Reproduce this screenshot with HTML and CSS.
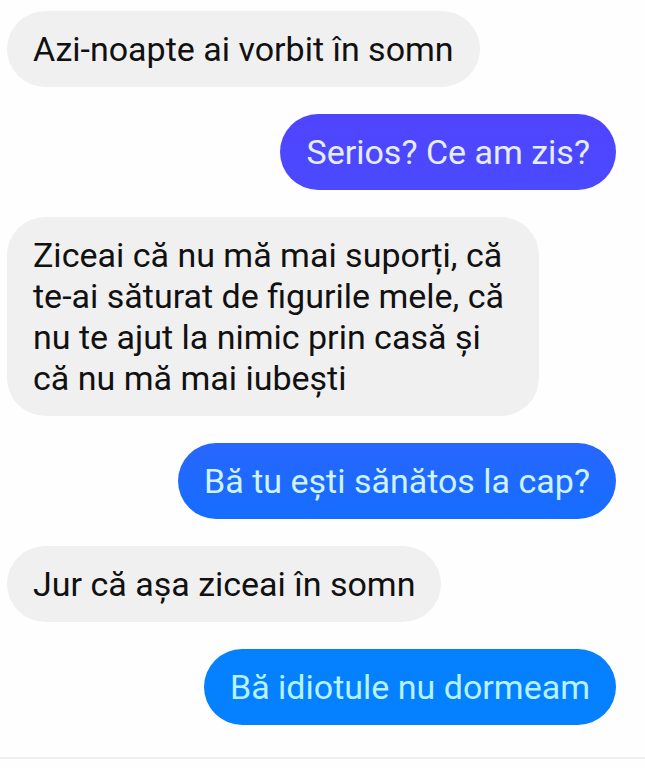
FILE: index.html
```html
<!DOCTYPE html>
<html lang="ro">
<head>
    <meta charset="UTF-8">
    <meta name="viewport" content="width=device-width, initial-scale=1.0">
    <title>Chat</title>
    <link rel="stylesheet" href="styles.css">
</head>
<body>
    <main class="chat">
        <p class="message received">Azi-noapte ai vorbit în somn</p>
        <p class="message sent violet">Serios? Ce am zis?</p>
        <p class="message received">Ziceai că nu mă mai suporți, că te-ai săturat de figurile mele, că nu te ajut la nimic prin casă și că nu mă mai iubești</p>
        <p class="message sent blue">Bă tu ești sănătos la cap?</p>
        <p class="message received">Jur că așa ziceai în somn</p>
        <p class="message sent azure">Bă idiotule nu dormeam</p>
    </main>
</body>
</html>
```

FILE: styles.css
```css
* {
    box-sizing: border-box;
}
body {
    margin: 0;
    background-color: #fefefe;
    font-family: Roboto, "Liberation Sans", sans-serif;
}
.chat {
    display: flex;
    flex-direction: column;
    align-items: flex-start;
    gap: 27px;
    padding: 11px 29px 32px 7px;
    border-bottom: 2px solid #f0f0f0;
}
.message {
    max-width: 532px;
    margin: 0;
    padding: 18px 26px 17px;
    border-radius: 38px;
    font-size: 34px;
    line-height: 41px;
}
.received {
    background-color: #f0f0f0;
    color: #111;
}
.sent {
    align-self: flex-end;
    color: #e4eeff;
}
.violet {
    background: linear-gradient(#5044ff, #4a4aff);
}
.blue {
    background: linear-gradient(#2866ff, #156dff);
    color: #cdf3ff;
}
.azure {
    background-color: #0580ff;
    color: #b4f3ff;
}
```
